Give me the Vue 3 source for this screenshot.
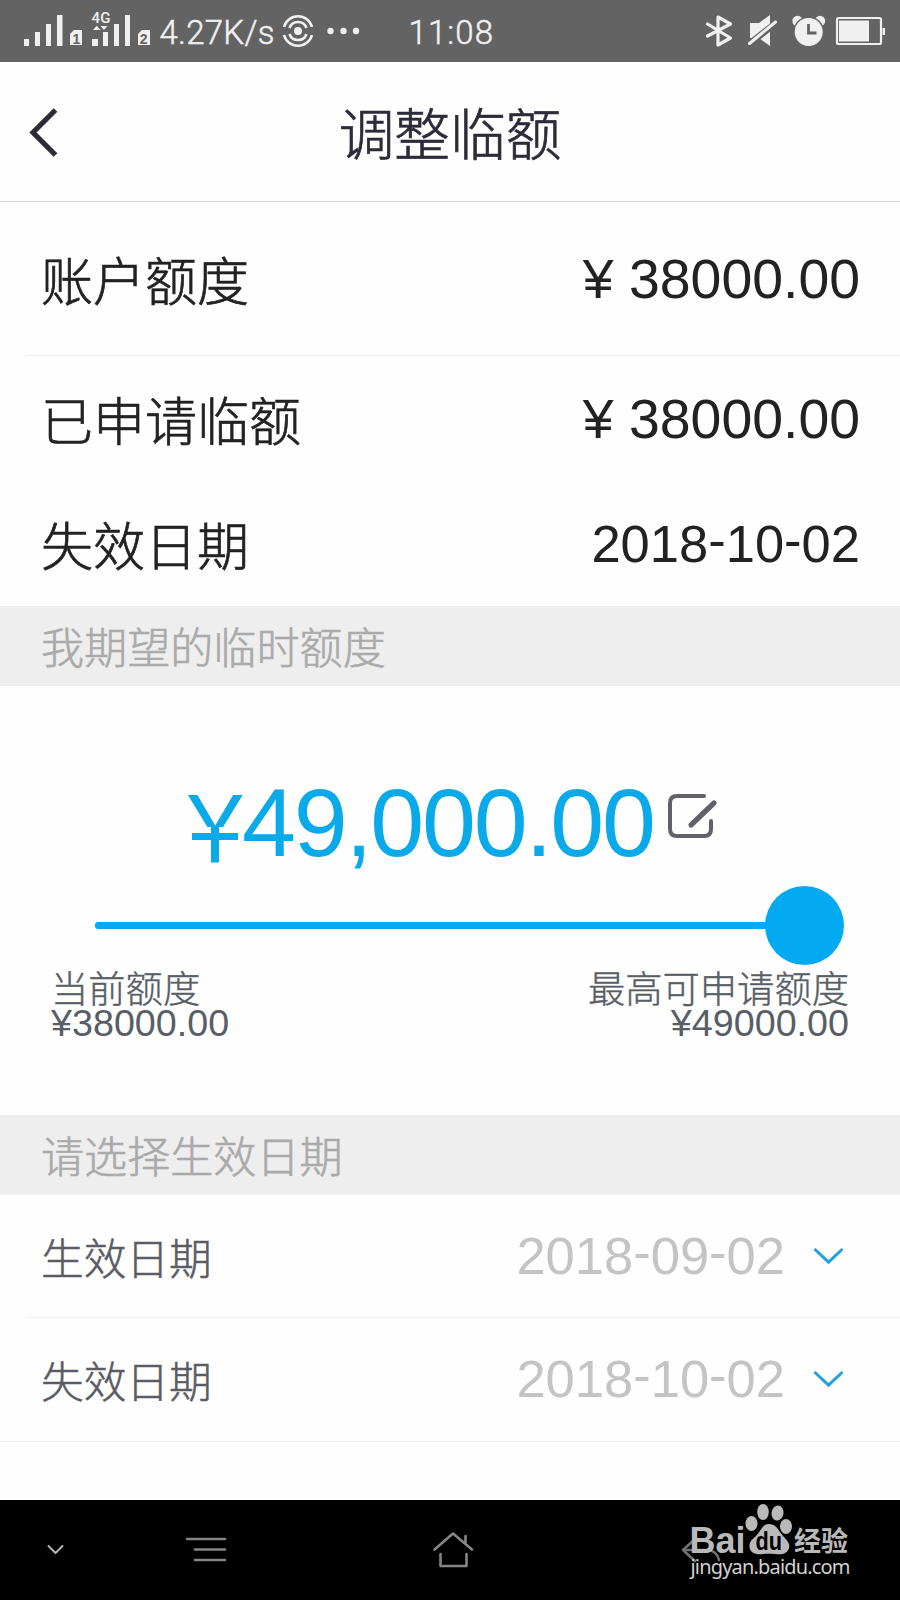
<script setup>
const limits = [
  { label: '账户额度', value: '¥ 38000.00', kind: 'account' },
  { label: '已申请临额', value: '¥ 38000.00', kind: 'applied' },
]
const dates = [
  { label: '生效日期', parts: ['2018', '09', '02'] },
  { label: '失效日期', parts: ['2018', '10', '02'] },
]
</script>

<template>
  <div class="screen">
    <header class="status">
      <svg width="900" height="62" viewBox="0 0 900 62">
        <g fill="#f0f0f0">
          <path d="M24 39h5v7h-5zM35 32h5v14h-5zM46 24h5v22h-5zM57 15h5.500v31H57z" />
          <path d="M74 30h8v15H70V34z" />
          <path d="M92 39h6v7h-6zM103 32h5v14h-5zM114 24h5v22h-5zM125 15h5v31h-5z" />
          <path d="M93 30l3.700-4.300 3.800 4.300zM100.500 26h7l-3.500 4z" />
          <path d="M142 30h8v15h-12V34z" />
          <text class="gen" x="91.500" y="23.300" textLength="19">4G</text>
          <text class="clock" x="159.500" y="43.800" textLength="115">4.27K/s</text>
          <text class="clock" x="408.500" y="44.300" textLength="84.500">11:08</text>
          <circle cx="298" cy="31" r="4" />
          <circle cx="330.500" cy="31" r="3.200" /><circle cx="343.500" cy="31" r="3.200" /><circle cx="356" cy="31" r="3.200" />
        </g>
        <g fill="#636363">
          <text class="sim" x="72.500" y="43.500">1</text>
          <text class="sim" x="139.700" y="43.500">2</text>
        </g>
        <g fill="none" stroke="#f0f0f0" stroke-width="2.600">
          <path d="M284 27a14.500 14.500 0 0 1 28 0M284 35a14.500 14.500 0 0 0 28 0" />
          <path d="M289.500 28a9 9 0 0 1 17 0M289.500 34a9 9 0 0 0 17 0" />
          <path d="M707.500 24l23 14-12.500 7V17l12.500 7-23 12" stroke-width="3.200" stroke-linejoin="round" stroke-linecap="round" />
        </g>
        <path d="M750 23h9l11-8v31l-11-8h-9z" fill="#f0f0f0" />
        <path d="M749 44l27-21" stroke="#636363" stroke-width="6.500" />
        <path d="M749.500 43.500l26-21.500" stroke="#f0f0f0" stroke-width="3" stroke-linecap="round" />
        <g>
          <circle cx="797.500" cy="21" r="5.200" fill="#f0f0f0" /><circle cx="820" cy="21" r="5.200" fill="#f0f0f0" />
          <circle cx="808.700" cy="32" r="15.500" fill="#636363" />
          <circle cx="808.700" cy="32" r="14" fill="#f0f0f0" />
          <path d="M808.500 24v9h8" fill="none" stroke="#636363" stroke-width="2.800" />
        </g>
        <rect x="837" y="18" width="44" height="26" rx="1.500" fill="none" stroke="#f0f0f0" stroke-width="2.200" />
        <path d="M839 20.500h30v21h-30zM882.500 28h2.500v7h-2.500z" fill="#f0f0f0" />
      </svg>
    </header>

    <div class="titlebar">
      <svg class="back" width="30" height="50" viewBox="0 0 30 50"><path d="M27.500 3L5 25.500l22.500 22.500" fill="none" stroke="#2c2b38" stroke-width="5.200" /></svg>
      <h1>调整临额</h1>
    </div>

    <section class="limits">
      <div v-for="l in limits" :key="l.label" class="row" :class="l.kind">
        <span class="name">{{ l.label }}</span><span class="money">{{ l.value }}</span>
      </div>
      <div class="row expiry">
        <span class="name">失效日期</span>
        <span class="date">2018<i>-</i>10<i>-</i>02</span>
      </div>
    </section>

    <div class="band">我期望的临时额度</div>

    <section class="adjust">
      <div class="amount">
        <span class="yen"><span>¥</span></span><span class="figure">49,000.00</span>
        <svg width="54" height="48" viewBox="0 0 54 48" fill="none" stroke="#626069" stroke-width="4" stroke-linecap="round">
          <path d="M39 4H12Q5 4 5 11v26q0 7 7 7h27q7 0 7-7V29" /><path d="M49 11L26 33" stroke-width="5.200" />
        </svg>
      </div>
      <div class="slider"><div class="track"></div><div class="knob"></div></div>
      <div class="ends">
        <div><p>当前额度</p><b>¥38000.00</b></div>
        <div class="max"><p>最高可申请额度</p><b>¥49000.00</b></div>
      </div>
    </section>

    <div class="band">请选择生效日期</div>

    <section class="pickers">
      <div v-for="d in dates" :key="d.label" class="pick">
        <span class="caption">{{ d.label }}</span>
        <span class="date">{{ d.parts[0] }}<i>-</i>{{ d.parts[1] }}<i>-</i>{{ d.parts[2] }}</span>
        <svg width="32" height="18" viewBox="0 0 32 18"><path d="M1.500 2l14 13.200 14-13.200" fill="none" stroke="#22a2dc" stroke-width="3" /></svg>
      </div>
    </section>

    <nav class="keys">
      <svg width="900" height="100" viewBox="0 0 900 100">
        <g fill="none" stroke="#858585" stroke-width="2.600" stroke-linecap="round" stroke-linejoin="round">
          <path d="M48.500 46l7 7 7-7" stroke="#b4b4b4" stroke-width="2" />
          <path d="M187 39h38M195 49.500h30M195 60h30" />
          <path d="M434.500 49.500L453 33.500l19 16M465.500 36v8M440.500 54v12h26V54" />
          <path d="M695 39l-12 11 12 11M683 50h25q9 1 11 10" stroke="#707070" />
        </g>
        <g fill="#b9b9b9">
          <text class="bai" x="689.500" y="52.800" textLength="56" lengthAdjust="spacingAndGlyphs">Bai</text>
          <ellipse cx="751.500" cy="23.500" rx="6" ry="7.500" />
          <ellipse cx="763" cy="12" rx="5.800" ry="8" />
          <ellipse cx="777.500" cy="13" rx="6" ry="7.500" transform="rotate(8 777.500 13)" />
          <ellipse cx="786" cy="26.500" rx="6" ry="7.500" />
          <path d="M769 24c8 0 10 8 14 12 5 5 7 8 6 12-2 7-9 6.500-14 6-4-.500-8-.500-12 0-7 1-13-1-13.500-7-.500-6 3.500-8 6.500-11 5-5 6-12 13-12z" />
          <text class="du" x="755.500" y="49.500" fill="#000" textLength="26.500" lengthAdjust="spacingAndGlyphs">du</text>
          <text class="jy" x="794" y="50.500" textLength="54">经验</text>
          <text class="url" x="690.500" y="74" fill="#d2d2d2" textLength="160">jingyan.baidu.com</text>
        </g>
      </svg>
    </nav>
  </div>
</template>

<style>
body { background: #fefefe; }
</style>

<style scoped>
.screen { width: 900px; height: 1600px; display: flex; flex-direction: column; overflow: hidden; background: #fefefe; font-family: "Liberation Sans", "Noto Sans CJK SC", sans-serif; color: #222; }
svg { display: block; flex: none; }
.status { height: 62px; background: #636363; flex: none; }
.clock { font: 300 33px Roboto, sans-serif; stroke: #f0f0f0; stroke-width: .5px; }
.gen { font: 500 15px Roboto, sans-serif; }
.sim { font: 700 14px "Liberation Sans", sans-serif; }
.titlebar { height: 140px; box-sizing: border-box; border-bottom: 1px solid #d6d6d6; display: grid; grid-template-columns: 90px 1fr 90px; align-items: center; flex: none; }
.back { margin-left: 28px; }
h1 { margin: 0; padding-bottom: 2px; text-align: center; font: 300 55.700px/70px "Noto Sans CJK SC", sans-serif; color: #2c2b38; -webkit-text-stroke: .7px #2c2b38; }
.limits { height: 404px; flex: none; }
.row { display: flex; justify-content: space-between; align-items: center; box-sizing: border-box; padding: 0 40px 0 15px; margin-left: 26px; }
.account { height: 154px; border-bottom: 1px solid #ececec; }
.applied { height: 126px; }
.expiry { height: 124px; }
.name { font: 300 52px/60px "Noto Sans CJK SC", sans-serif; -webkit-text-stroke: .7px #222; }
.money { font-size: 55.400px; line-height: 60px; }
.date { font-size: 52.500px; line-height: 60px; }
.date i { font-style: normal; vertical-align: 4px; line-height: 0; }
.band { height: 80px; box-sizing: border-box; padding-left: 41px; background: #eee; color: #aaa; font: 300 43.100px/79px "Noto Sans CJK SC", sans-serif; -webkit-text-stroke: .6px #aaa; flex: none; }
.adjust { height: 429px; flex: none; }
.amount { height: 199px; box-sizing: border-box; padding: 94px 0 0 188px; display: flex; align-items: flex-start; color: #0aa9ea; line-height: 90px; }
.yen { position: relative; width: 54px; height: 90px; margin-top: 4px; font-size: 98px; }
.yen span { display: block; width: 55px; clip-path: polygon(0 0, 100% 0, 100% 43px, 31px 43px, 31px 100%, 23px 100%, 23px 43px, 0 43px); }
.yen::after { content: ""; position: absolute; left: 4px; top: 49px; width: 46px; height: 7px; background: #0aa9ea; }
.figure { font-size: 97px; letter-spacing: -2.200px; margin: -2px 11px 0 0; }
.amount svg { margin-top: 12px; }
.slider { height: 80px; margin: 0 56px 0 95px; display: flex; align-items: center; }
.track { flex: 1; height: 7px; border-radius: 3px; background: #0aa9ea; margin-right: -3px; }
.knob { width: 79px; height: 79px; border-radius: 50%; background: #03a9f1; }
.ends { display: flex; justify-content: space-between; padding: 3px 51px 0; color: #585e66; }
.ends p { margin: 0; font: 300 37.300px/38px "Noto Sans CJK SC", sans-serif; -webkit-text-stroke: .4px #585e66; }
.ends b { display: block; font-weight: 400; font-size: 37.700px; line-height: 34px; }
.max { text-align: right; }
.pickers { height: 305px; flex: none; }
.pick { height: 123px; box-sizing: border-box; display: flex; align-items: center; margin-left: 26px; padding: 0 55px 1px 15px; border-bottom: 1px solid #f0f0f0; }
.pick:last-child { margin-left: 0; padding-left: 41px; padding-bottom: 2px; height: 124px; }
.caption { flex: 1; font: 300 42.700px/60px "Noto Sans CJK SC", sans-serif; color: #5a5b64; -webkit-text-stroke: .5px #5a5b64; }
.pick .date { color: #c4c4c4; margin-right: 28px; }
.keys { height: 100px; background: #000; flex: none; }
.bai { font: 700 37px "Liberation Sans", sans-serif; }
.du { font: 700 25px "Liberation Sans", sans-serif; }
.jy { font: 700 27px "Noto Sans CJK SC", sans-serif; }
.url { font: 400 20px "Noto Sans", sans-serif; }
</style>
